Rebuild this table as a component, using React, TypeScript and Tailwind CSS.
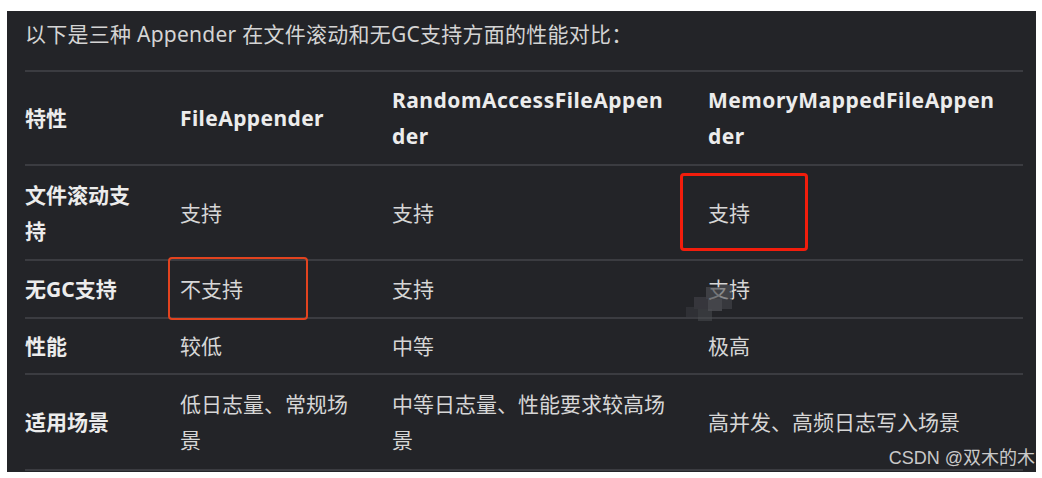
import React from "react";

const font = {
  fontFamily: '"Noto Sans", "Noto Sans CJK SC", sans-serif',
};

function Cell({
  children,
  bold,
  className = "",
}: {
  children: React.ReactNode;
  bold?: boolean;
  className?: string;
}) {
  return (
    <div
      className={`flex items-center whitespace-nowrap text-[21px] leading-[36px] ${
        bold ? "font-bold text-[#ececec]" : "text-[#d6d6d6]"
      } ${className}`}
    >
      <div>{children}</div>
    </div>
  );
}

function Row({
  h,
  cells,
}: {
  h: string;
  cells: React.ReactNode[];
}) {
  return (
    <div className={`grid grid-cols-[155px_212px_316px_315px] border-t-2 border-[#3b3c41] ${h}`}>
      {cells}
    </div>
  );
}

export default function App() {
  return (
    <div className="w-[1042px] h-[478px] bg-white overflow-hidden" style={font}>
      <div className="ml-[7px] mt-[11px] w-[1029px] h-[461px] bg-[#232428] relative">
        <div className="pl-[18px] pt-[5px] h-[59px] text-[21px] leading-[36px] tracking-[0.25px] text-[#d4d4d4]">
          以下是三种 Appender 在文件滚动和无GC支持方面的性能对比：
        </div>
        <div className="ml-[18px] w-[998px]">
          <Row
            h="h-[94px]"
            cells={[
              <Cell key="a" bold>特性</Cell>,
              <Cell key="b" bold className="tracking-[0.4px]">FileAppender</Cell>,
              <Cell key="c" bold className="tracking-[0.5px]">
                RandomAccessFileAppen
                <br />
                der
              </Cell>,
              <Cell key="d" bold className="tracking-[0.5px]">
                MemoryMappedFileAppen
                <br />
                der
              </Cell>,
            ]}
          />
          <Row
            h="h-[95px]"
            cells={[
              <Cell key="a" bold>
                文件滚动支
                <br />
                持
              </Cell>,
              <Cell key="b">支持</Cell>,
              <Cell key="c">支持</Cell>,
              <Cell key="d" className="relative">
                支持
                <div className="absolute left-[-28px] top-[7px] w-[128px] h-[78px] border-[3px] border-[#f21d0c] rounded-[4px]" />
              </Cell>,
            ]}
          />
          <Row
            h="h-[58px]"
            cells={[
              <Cell key="a" bold>无GC支持</Cell>,
              <Cell key="b" className="relative">
                不支持
                <div className="absolute left-[-12px] top-[-4px] w-[140px] h-[63px] border-2 border-[#e2431f] rounded-[4px]" />
              </Cell>,
              <Cell key="c">支持</Cell>,
              <Cell key="d" className="relative">
                支持
                <svg
                  className="absolute left-[-24px] top-[20px]"
                  width="80"
                  height="48"
                  viewBox="0 0 80 48"
                >
                  <rect x="22" y="6" width="14" height="12" fill="#4a4b50" opacity="0.7" />
                  <rect x="36" y="4" width="12" height="14" fill="#55565b" opacity="0.6" />
                  <rect x="10" y="16" width="14" height="12" fill="#3e3f44" opacity="0.7" />
                  <rect x="24" y="18" width="14" height="12" fill="#5a5b60" opacity="0.6" />
                  <rect x="38" y="18" width="10" height="10" fill="#45464b" opacity="0.6" />
                  <rect x="2" y="26" width="12" height="10" fill="#35363b" opacity="0.7" />
                  <rect x="14" y="28" width="14" height="12" fill="#4c4d52" opacity="0.5" />
                </svg>
              </Cell>,
            ]}
          />
          <Row
            h="h-[56px]"
            cells={[
              <Cell key="a" bold>性能</Cell>,
              <Cell key="b">较低</Cell>,
              <Cell key="c">中等</Cell>,
              <Cell key="d">极高</Cell>,
            ]}
          />
          <Row
            h="h-[96px]"
            cells={[
              <Cell key="a" bold>适用场景</Cell>,
              <Cell key="b">
                低日志量、常规场
                <br />
                景
              </Cell>,
              <Cell key="c">
                中等日志量、性能要求较高场
                <br />
                景
              </Cell>,
              <Cell key="d">高并发、高频日志写入场景</Cell>,
            ]}
          />
          <div className="border-t-2 border-[#3b3c41]" />
        </div>
        <div
          className="absolute right-[1px] bottom-[2px] text-[18px] leading-[24px] text-[#c9c9c9] whitespace-nowrap"
          style={{ fontFamily: '"Liberation Sans", "Noto Sans CJK SC", sans-serif' }}
        >
          CSDN @双木的木
        </div>
      </div>
    </div>
  );
}
